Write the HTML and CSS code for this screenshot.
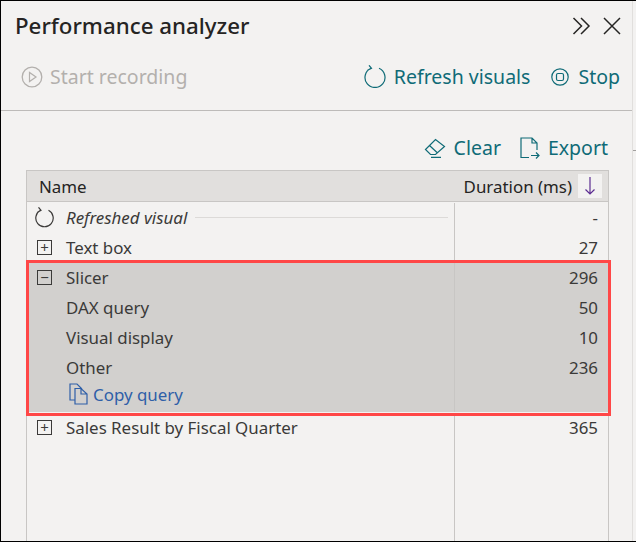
FILE: index.html
```html
<!DOCTYPE html>
<html lang="en">
<head>
<meta charset="utf-8">
<title>Performance analyzer</title>
<link rel="stylesheet" href="styles.css">
</head>
<body>
<main class="pane">
  <div class="content">
  <header class="title-row">
    <h1 class="title">Performance analyzer</h1>
    <div class="window-icons">
      <svg class="icon-win" width="19" height="18" viewBox="0 0 19 18"><path d="M1.500 1l8 8-8 8M9 1l8 8-8 8" fill="none" stroke="#252423" stroke-width="1.500"/></svg>
      <svg class="icon-win" width="18" height="18" viewBox="0 0 18 18"><path d="M1 1l16 16M17 1L1 17" fill="none" stroke="#252423" stroke-width="1.500"/></svg>
    </div>
  </header>
  <div class="toolbar">
    <div class="tool tool-disabled">
      <svg width="22" height="22" viewBox="0 0 22 22"><circle cx="11" cy="11" r="9.800" fill="none" stroke="#b3b0ad" stroke-width="1.300"/><path d="M8.500 6.500v9l6.500-4.500z" fill="none" stroke="#b3b0ad" stroke-width="1.200"/></svg>
      <span>Start recording</span>
    </div>
    <div class="tool-group">
      <div class="tool">
        <svg width="22" height="23" viewBox="0 0 22 23"><path d="M7 3.300A10 10 0 1 0 15 3.300M5 0.300L7.500 3.300L3.500 5.300" fill="none" stroke="#0f6b77" stroke-width="1.200"/></svg>
        <span>Refresh visuals</span>
      </div>
      <div class="tool tool-stop">
        <svg width="18" height="18" viewBox="0 0 18 18"><circle cx="9" cy="9" r="8.200" fill="none" stroke="#0f6b77" stroke-width="1.200"/><rect x="5.500" y="5.500" width="7" height="7" rx="1.500" fill="none" stroke="#0f6b77" stroke-width="1.200"/></svg>
        <span>Stop</span>
      </div>
    </div>
  </div>
  <div class="actions">
    <div class="tool">
      <svg width="22" height="20" viewBox="0 0 22 20"><path d="M1.500 11.500L11.500 1.500L20.500 8.500L11.500 16.500H6.500zM5.500 7.500L13 14.500M7 19.300H17" fill="none" stroke="#0f6b77" stroke-width="1.200"/></svg>
      <span>Clear</span>
    </div>
    <div class="tool">
      <svg width="20" height="22" viewBox="0 0 20 22"><path d="M9 20.500H1V1H12L17 6V13M12 1V6H17M11 18.500H19M16 15.500L19 18.500L16 21.500" fill="none" stroke="#0f6b77" stroke-width="1.200"/></svg>
      <span>Export</span>
    </div>
  </div>
  <section class="table">
    <div class="head">
      <span class="cell-name">Name</span>
      <span class="cell-dur">Duration (ms)</span>
      <span class="sort"><svg width="12" height="20" viewBox="0 0 12 20"><path d="M6 1v17M1.500 13.500L6 18l4.500-4.500" fill="none" stroke="#5c2d91" stroke-width="1.200"/></svg></span>
    </div>
    <div class="body">
      <div class="row">
        <span class="cell-name">
          <svg class="glyph" width="19" height="21" viewBox="0 0 19 21"><path d="M5.500 3.300A8.700 8.700 0 1 0 13.500 3.300M3.500 0.300L6 3.300L2.500 5.300" fill="none" stroke="#3b3a39" stroke-width="1.200"/></svg>
          <em>Refreshed visual</em><i class="rule"></i>
        </span>
        <span class="cell-num">-</span>
      </div>
      <div class="row">
        <span class="cell-name"><span class="box">+</span>Text box</span>
        <span class="cell-num">27</span>
      </div>
      <div class="group">
        <div class="row row-first">
          <span class="cell-name"><span class="box">−</span>Slicer</span>
          <span class="cell-num">296</span>
        </div>
        <div class="row">
          <span class="cell-name indent">DAX query</span>
          <span class="cell-num">50</span>
        </div>
        <div class="row">
          <span class="cell-name indent">Visual display</span>
          <span class="cell-num">10</span>
        </div>
        <div class="row">
          <span class="cell-name indent">Other</span>
          <span class="cell-num">236</span>
        </div>
        <div class="row row-copy">
          <span class="cell-name copy">
            <svg width="20" height="22" viewBox="0 0 20 22"><path d="M6 17H1V1H8L13 6M6 5.500H12L18 11V21H6zM12 5.500V11H18" fill="none" stroke="#2f5fa8" stroke-width="1.200"/></svg>
            Copy query
          </span>
          <span class="cell-num"></span>
        </div>
      </div>
      <div class="row">
        <span class="cell-name"><span class="box">+</span>Sales Result by Fiscal Quarter</span>
        <span class="cell-num">365</span>
      </div>
    </div>
  </section>
  </div>
  <div class="edge"></div>
</main>
</body>
</html>
```
FILE: styles.css
```css
* { box-sizing: border-box; }
html, body { margin: 0; height: 100%; }
body { background: #f3f2f1; font-family: "Noto Sans", "Open Sans", sans-serif; color: #3b3a39; overflow: hidden; }
.pane { width: 636px; height: 542px; border: 1px solid #000; border-right-width: 0; display: flex; overflow: hidden; background: #f3f2f1; }
.content { width: 632px; flex: none; display: flex; flex-direction: column; border-right: 1px solid #e1dfdd; }
.edge { flex: 1; }
.edge::before { content: ""; display: block; height: 1px; margin-top: 149px; background: #a19f9d; }
.title-row { display: flex; justify-content: space-between; align-items: center; height: 50px; padding: 0 11px 0 14px; flex: none; }
.title { margin: 0; font-size: 22.300px; font-weight: 500; color: #252423; line-height: 50px; }
.window-icons { display: flex; gap: 12px; align-items: center; }
.toolbar { height: 60px; flex: none; display: flex; justify-content: space-between; align-items: center; padding: 0 12px 8px 20px; border-bottom: 1px solid #bdbbb9; font-size: 19.500px; color: #0f6b77; }
.tool-group { display: flex; gap: 21px; }
.tool { display: flex; align-items: center; gap: 8px; }
.tool-stop { gap: 9px; }
.tool-disabled { color: #b3b0ad; gap: 7px; }
.actions { height: 59px; flex: none; display: flex; justify-content: flex-end; align-items: center; gap: 19px; padding: 14px 24px 0 0; font-size: 19.500px; color: #0f6b77; }
.table { flex: 1; margin: 0 23px 0 25px; border: 1px solid #c8c6c4; border-bottom: 0; display: flex; flex-direction: column; font-size: 16.900px; }
.head { height: 31px; flex: none; background: #e1dfdd; border-bottom: 1px solid #c8c6c4; display: flex; align-items: center; padding: 0 6px 0 12px; color: #252423; }
.head .cell-name { flex: 1; }
.sort { width: 24px; height: 24px; margin-left: 6px; background: #f3f2f1; display: flex; justify-content: center; align-items: center; }
.body { flex: 1; position: relative; display: flex; flex-direction: column; }
.body::after { content: ""; position: absolute; top: 1px; bottom: 0; left: 427px; width: 1px; background: #c8c6c4; }
.row { height: 30px; display: flex; align-items: center; flex: none; padding-right: 10px; }
.cell-name { flex: 1; display: flex; align-items: center; min-width: 0; white-space: nowrap; }
.cell-num { width: 143px; flex: none; text-align: right; }
.box { width: 15px; height: 15px; border: 1px solid #3b3a39; margin: 0 14px 0 10px; display: flex; justify-content: center; align-items: center; font-size: 15px; line-height: 1; flex: none; }
.glyph { margin: 0 12px 0 8px; flex: none; }
.rule { flex: 1; height: 1px; background: #dcdad8; margin: 0 7px 0 8px; }
.group { position: relative; z-index: 1; margin: -2px -3px -4px -1px; border: 3px solid #ff4747; background: #d2d0ce; padding-bottom: 5px; box-shadow: inset 0 -1px 0 #f3f2f1; }
.group::before { content: ""; position: absolute; top: 0; bottom: 1px; left: 425px; width: 1px; background: #c8c6c4; }
.group .box { margin-left: 8px; }
.row-first { height: 29px; padding-bottom: 1px; }
.indent { padding-left: 37px; }
.row-copy { height: 26px; padding-bottom: 2px; }
.copy { color: #2f5fa8; gap: 4px; padding-left: 40px; }
```
